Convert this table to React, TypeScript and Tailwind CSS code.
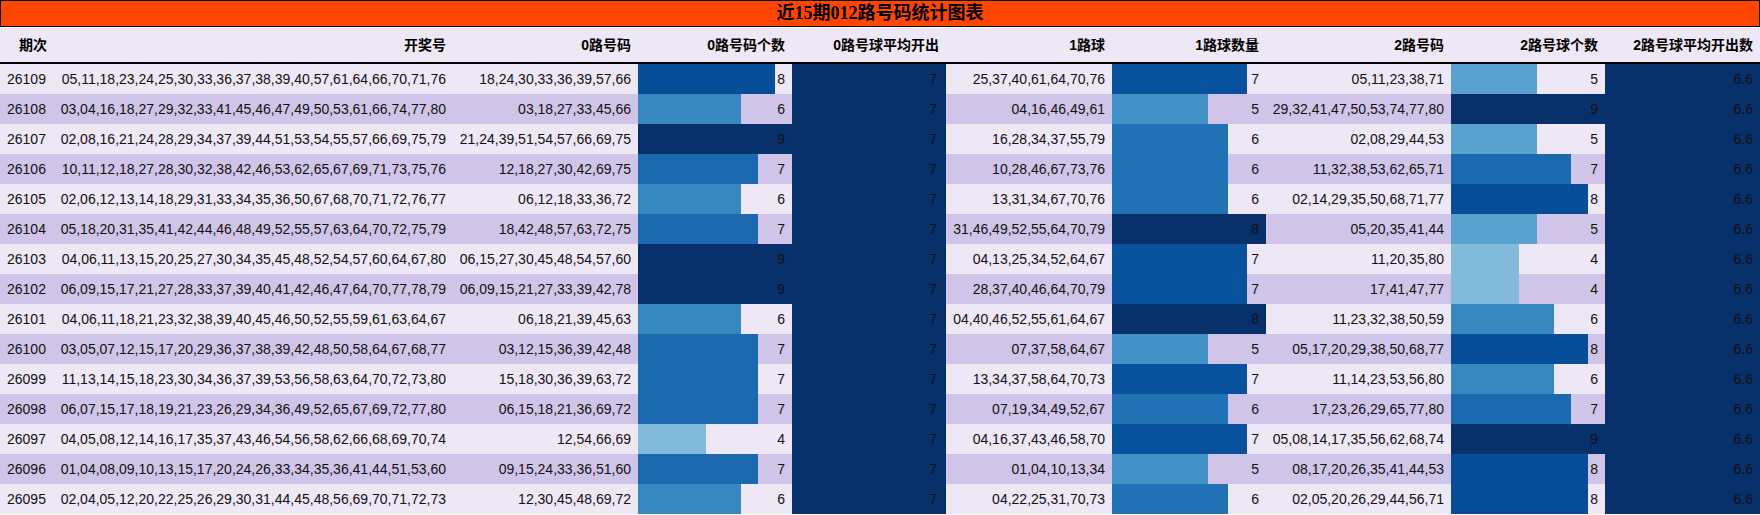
import React from "react";

type Row = {
  p: string;
  all: string;
  r0: string;
  c0: number;
  r1: string;
  c1: number;
  r2: string;
  c2: number;
};

const rows: Row[] = [
  { p: "26109", all: "05,11,18,23,24,25,30,33,36,37,38,39,40,57,61,64,66,70,71,76", r0: "18,24,30,33,36,39,57,66", c0: 8, r1: "25,37,40,61,64,70,76", c1: 7, r2: "05,11,23,38,71", c2: 5 },
  { p: "26108", all: "03,04,16,18,27,29,32,33,41,45,46,47,49,50,53,61,66,74,77,80", r0: "03,18,27,33,45,66", c0: 6, r1: "04,16,46,49,61", c1: 5, r2: "29,32,41,47,50,53,74,77,80", c2: 9 },
  { p: "26107", all: "02,08,16,21,24,28,29,34,37,39,44,51,53,54,55,57,66,69,75,79", r0: "21,24,39,51,54,57,66,69,75", c0: 9, r1: "16,28,34,37,55,79", c1: 6, r2: "02,08,29,44,53", c2: 5 },
  { p: "26106", all: "10,11,12,18,27,28,30,32,38,42,46,53,62,65,67,69,71,73,75,76", r0: "12,18,27,30,42,69,75", c0: 7, r1: "10,28,46,67,73,76", c1: 6, r2: "11,32,38,53,62,65,71", c2: 7 },
  { p: "26105", all: "02,06,12,13,14,18,29,31,33,34,35,36,50,67,68,70,71,72,76,77", r0: "06,12,18,33,36,72", c0: 6, r1: "13,31,34,67,70,76", c1: 6, r2: "02,14,29,35,50,68,71,77", c2: 8 },
  { p: "26104", all: "05,18,20,31,35,41,42,44,46,48,49,52,55,57,63,64,70,72,75,79", r0: "18,42,48,57,63,72,75", c0: 7, r1: "31,46,49,52,55,64,70,79", c1: 8, r2: "05,20,35,41,44", c2: 5 },
  { p: "26103", all: "04,06,11,13,15,20,25,27,30,34,35,45,48,52,54,57,60,64,67,80", r0: "06,15,27,30,45,48,54,57,60", c0: 9, r1: "04,13,25,34,52,64,67", c1: 7, r2: "11,20,35,80", c2: 4 },
  { p: "26102", all: "06,09,15,17,21,27,28,33,37,39,40,41,42,46,47,64,70,77,78,79", r0: "06,09,15,21,27,33,39,42,78", c0: 9, r1: "28,37,40,46,64,70,79", c1: 7, r2: "17,41,47,77", c2: 4 },
  { p: "26101", all: "04,06,11,18,21,23,32,38,39,40,45,46,50,52,55,59,61,63,64,67", r0: "06,18,21,39,45,63", c0: 6, r1: "04,40,46,52,55,61,64,67", c1: 8, r2: "11,23,32,38,50,59", c2: 6 },
  { p: "26100", all: "03,05,07,12,15,17,20,29,36,37,38,39,42,48,50,58,64,67,68,77", r0: "03,12,15,36,39,42,48", c0: 7, r1: "07,37,58,64,67", c1: 5, r2: "05,17,20,29,38,50,68,77", c2: 8 },
  { p: "26099", all: "11,13,14,15,18,23,30,34,36,37,39,53,56,58,63,64,70,72,73,80", r0: "15,18,30,36,39,63,72", c0: 7, r1: "13,34,37,58,64,70,73", c1: 7, r2: "11,14,23,53,56,80", c2: 6 },
  { p: "26098", all: "06,07,15,17,18,19,21,23,26,29,34,36,49,52,65,67,69,72,77,80", r0: "06,15,18,21,36,69,72", c0: 7, r1: "07,19,34,49,52,67", c1: 6, r2: "17,23,26,29,65,77,80", c2: 7 },
  { p: "26097", all: "04,05,08,12,14,16,17,35,37,43,46,54,56,58,62,66,68,69,70,74", r0: "12,54,66,69", c0: 4, r1: "04,16,37,43,46,58,70", c1: 7, r2: "05,08,14,17,35,56,62,68,74", c2: 9 },
  { p: "26096", all: "01,04,08,09,10,13,15,17,20,24,26,33,34,35,36,41,44,51,53,60", r0: "09,15,24,33,36,51,60", c0: 7, r1: "01,04,10,13,34", c1: 5, r2: "08,17,20,26,35,41,44,53", c2: 8 },
  { p: "26095", all: "02,04,05,12,20,22,25,26,29,30,31,44,45,48,56,69,70,71,72,73", r0: "12,30,45,48,69,72", c0: 6, r1: "04,22,25,31,70,73", c1: 6, r2: "02,05,20,26,29,44,56,71", c2: 8 },
];

// Blues colour scale, value / max of the column
const blue9: Record<number, string> = {
  9: "bg-[#08306b]",
  8: "bg-[#084d97]",
  7: "bg-[#1b6aaf]",
  6: "bg-[#3787c0]",
  5: "bg-[#59a2cf]",
  4: "bg-[#82badb]",
};
const blue8: Record<number, string> = {
  8: "bg-[#08306b]",
  7: "bg-[#08519c]",
  6: "bg-[#2171b5]",
  5: "bg-[#4292c6]",
};

const grid =
  "grid grid-cols-[53px_400px_185px_154px_154px_166px_154px_185px_154px_155px]";

function BarCell({ value, max, color }: { value: number; max: number; color: string }) {
  return (
    <div className="relative h-full">
      <div className={`absolute left-0 top-0 h-full ${color}`} style={{ width: `${(value / max) * 100}%` }} />
      <div className="relative flex h-full items-center justify-end pr-[7px]">{value}</div>
    </div>
  );
}

export default function App() {
  const headers = [
    "开奖号",
    "0路号码",
    "0路号码个数",
    "0路号球平均开出",
    "1路球",
    "1路球数量",
    "2路号码",
    "2路号球个数",
    "2路号球平均开出数",
  ];
  return (
    <div className="w-[1760px] h-[515px] bg-white flex flex-col overflow-hidden">
      <div className="h-[27px] bg-[#ff4500] border border-black flex items-center justify-center text-[18px] font-bold text-black [font-family:'Liberation_Serif','Noto_Sans_CJK_SC',serif]">
        近15期012路号码统计图表
      </div>
      <div className="h-px" />
      <div
        className={`${grid} h-[36px] bg-[#ede7f6] border-b-2 border-black text-[14px] font-bold text-black [font-family:'Liberation_Sans','Noto_Sans_CJK_SC',sans-serif]`}
      >
        <div className="flex items-center pl-[19px]">期次</div>
        {headers.map((h) => (
          <div key={h} className="flex items-center justify-end pr-[7px] whitespace-nowrap">
            {h}
          </div>
        ))}
      </div>
      <div className="flex flex-col text-[14px] text-[#111] [font-family:'Liberation_Sans','Noto_Sans_CJK_SC',sans-serif]">
        {rows.map((r, i) => (
          <div key={r.p} className={`${grid} h-[30px] ${i % 2 === 0 ? "bg-[#ede7f6]" : "bg-[#d1c4e9]"}`}>
            <div className="flex items-center pl-[7px]">{r.p}</div>
            <div className="flex items-center justify-end pr-[7px] whitespace-nowrap">{r.all}</div>
            <div className="flex items-center justify-end pr-[7px] whitespace-nowrap">{r.r0}</div>
            <BarCell value={r.c0} max={9} color={blue9[r.c0]} />
            <div className="flex items-center justify-end pr-[9px] bg-[#08306b]">7</div>
            <div className="flex items-center justify-end pr-[7px] whitespace-nowrap">{r.r1}</div>
            <BarCell value={r.c1} max={8} color={blue8[r.c1]} />
            <div className="flex items-center justify-end pr-[7px] whitespace-nowrap">{r.r2}</div>
            <BarCell value={r.c2} max={9} color={blue9[r.c2]} />
            <div className="flex items-center justify-end pr-[7px] bg-[#08306b]">6.6</div>
          </div>
        ))}
      </div>
    </div>
  );
}
